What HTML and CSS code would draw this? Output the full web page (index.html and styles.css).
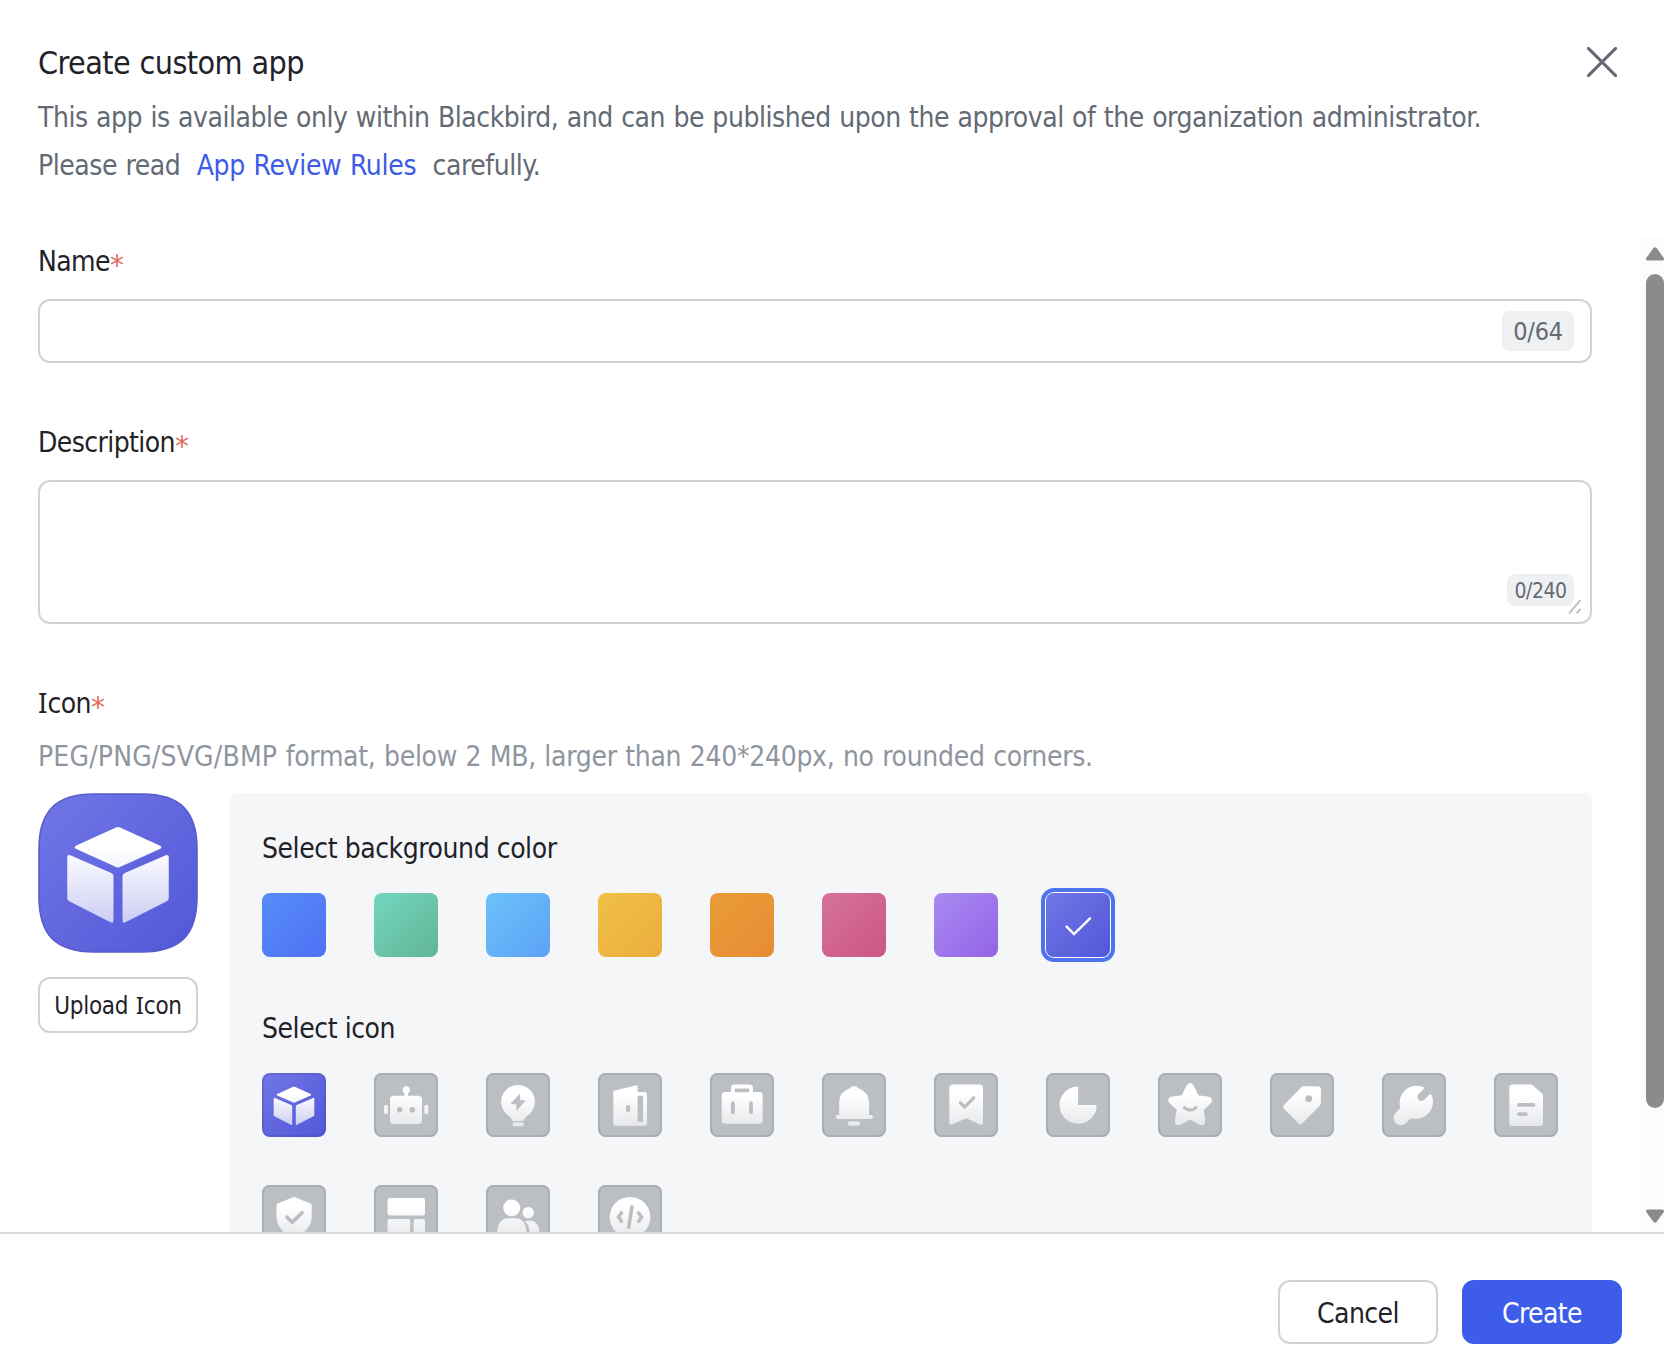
FILE: index.html
```html
<!DOCTYPE html>
<html lang="en">
<head>
<meta charset="utf-8">
<title>Create custom app</title>
<link rel="stylesheet" href="styles.css">
</head>
<body>
<svg class="defs" aria-hidden="true">
  <defs>
    <linearGradient id="indigo" x1="0" y1="0" x2="1" y2="1">
      <stop offset="0" stop-color="#7176e6"/><stop offset="1" stop-color="#5257d8"/>
    </linearGradient>
    <linearGradient id="glyph" gradientUnits="userSpaceOnUse" x1="0" y1="22" x2="0" y2="54">
      <stop offset="0" stop-color="#fff"/><stop offset="1" stop-color="#e6e7e9"/>
    </linearGradient>
    <linearGradient id="glass" gradientUnits="userSpaceOnUse" x1="0" y1="22" x2="0" y2="54">
      <stop offset="0" stop-color="#fff"/><stop offset="1" stop-color="#fff" stop-opacity=".66"/>
    </linearGradient>
    <symbol id="cube" viewBox="0 0 64 64">
      <g fill="url(#glass)">
        <path d="M31.2 13.8Q32 13.4 32.8 13.8L48.7 21Q50 21.7 48.7 22.4L32.8 29.6Q32 30 31.2 29.6L15.3 22.4Q14 21.7 15.3 21Z"/>
        <path d="M11.7 25.7Q11.7 24.4 12.9 24.9L29.3 32Q30.2 32.4 30.2 33.3V51Q30.2 52.3 29 51.7L12.5 43.3Q11.7 42.9 11.7 42Z"/>
        <path d="M52.3 25.7Q52.3 24.4 51.1 24.9L34.7 32Q33.8 32.4 33.8 33.3V51Q33.8 52.3 35 51.7L51.5 43.3Q52.3 42.9 52.3 42Z"/>
      </g>
    </symbol>
  </defs>
</svg>
<div class="dialog">
  <header class="header">
    <div class="heading">
      <h1 class="title">Create custom app</h1>
      <p class="subtitle">This app is available only within Blackbird, and can be published upon the approval of the organization administrator.<br>Please read <a class="link">App Review Rules</a> carefully.</p>
    </div>
    <svg class="close" viewBox="0 0 30 30"><path d="M1.4 1.4 28.6 28.6M28.6 1.4 1.4 28.6"/></svg>
  </header>

  <div class="body">
    <main class="content">
      <section class="field">
        <div class="label">Name<span class="star">*</span></div>
        <div class="input"><span class="count">0/64</span></div>
      </section>
      <section class="field">
        <div class="label">Description<span class="star">*</span></div>
        <div class="input textarea">
          <span class="count count-small">0/240</span>
          <svg class="resize" viewBox="0 0 14 16"><path d="M1.6 13.8 12.2 1.4M9.2 13.8 12.2 10.4"/></svg>
        </div>
      </section>
      <section class="field">
        <div class="label"><span class="cap-i">I</span>con<span class="star">*</span></div>
        <p class="hint"><span class="formats">PEG/PNG/SVG/BMP</span> format, below 2 MB, larger than 240*240px, no rounded corners.</p>
        <div class="picker">
          <div class="preview">
            <svg class="app-icon" viewBox="0 0 160 160">
              <path d="M1 56C1 18 18 1 56 1H104C142 1 159 18 159 56V104C159 142 142 159 104 159H56C18 159 1 142 1 104Z" fill="url(#indigo)" stroke="#575cc8" stroke-width="1.6"/>
              <use href="#cube" width="160" height="160"/>
            </svg>
            <button class="upload">Upload <span class="cap-i">I</span>con</button>
          </div>
          <div class="panel">
            <div class="label panel-label">Select background color</div>
            <div class="grid">
              <span class="swatch blue"></span>
              <span class="swatch green"></span>
              <span class="swatch sky"></span>
              <span class="swatch yellow"></span>
              <span class="swatch orange"></span>
              <span class="swatch pink"></span>
              <span class="swatch purple"></span>
              <span class="swatch indigo chosen"><svg viewBox="0 0 64 64"><path class="tick" d="M20.6 33.6 28 41 44 25.4"/></svg></span>
            </div>
            <div class="label panel-label second">Select icon</div>
            <div class="grid">
              <span class="tile indigo picked"><svg viewBox="0 0 64 64"><use href="#cube"/></svg></span>
              <span class="tile"><svg viewBox="0 0 64 64">
                <path d="M30.4 20.2A3.7 3.7 0 1 1 34 20.2V22.7H44.5Q48 22.7 48 26.2V47.5Q48 51 44.5 51H19.5Q16 51 16 47.5V26.2Q16 22.7 19.5 22.7H30.4Z"/>
                <rect x="10" y="32" width="4" height="9" rx="1.5"/><rect x="50.3" y="32" width="4" height="9" rx="1.5"/>
                <circle class="hole" cx="25.7" cy="36.7" r="2.8"/><circle class="hole" cx="38.4" cy="36.7" r="2.8"/>
              </svg></span>
              <span class="tile"><svg viewBox="0 0 64 64">
                <path d="M32 11.9A16.8 16.8 0 0 1 41.3 42.7Q39.3 44 38.5 46.2Q38 48 36 48H28Q26 48 25.5 46.2Q24.7 44 22.7 42.7A16.8 16.8 0 0 1 32 11.9Z"/>
                <rect x="26.5" y="49.2" width="11.4" height="4" rx="2"/>
                <path class="hole" d="M33.4 21.2Q34.2 20.4 34.2 21.6V27.2H38.6Q39.8 27.3 39 28.2L31.3 37Q30.4 37.9 30.4 36.7V31.2H25.6Q24.4 31 25.3 30Z"/>
              </svg></span>
              <span class="tile"><svg viewBox="0 0 64 64">
                <path d="M15.3 19.4Q15.3 17.9 16.8 17.4L38.4 12.3Q39.6 12 39.6 13.2V19H46Q49 19 49 22V50Q49 52.8 46.2 52.8H18Q15.3 52.8 15.3 50Z"/>
                <rect class="hole" x="39.6" y="22.8" width="5.4" height="26" rx=".6"/><rect class="hole" x="28" y="32" width="4.2" height="7.2" rx="2.1"/>
              </svg></span>
              <span class="tile"><svg viewBox="0 0 64 64">
                <path d="M21 19V15.2Q21 11.6 24.6 11.6H39.4Q43 11.6 43 15.2V19H49.2Q52.7 19 52.7 22.5V47.2Q52.7 50.7 49.2 50.7H15.2Q11.7 50.7 11.7 47.2V22.5Q11.7 19 15.2 19Z"/>
                <rect class="hole" x="24.8" y="15.6" width="14.4" height="3.6" rx=".6"/>
                <rect class="hole" x="21" y="28.3" width="3.8" height="12.9" rx="1.9"/><rect class="hole" x="39.1" y="28.3" width="3.8" height="12.9" rx="1.9"/>
              </svg></span>
              <span class="tile"><svg viewBox="0 0 64 64">
                <path d="M28.4 15Q28.8 13.2 30.6 13.2H33.6Q35.4 13.2 35.8 15Q47 18.6 47 30V42H49Q51 42 51 44T49 46H15.6Q13.6 46 13.6 44T15.6 42H17.2V30Q17.2 18.6 28.4 15Z"/>
                <rect x="25.8" y="48.2" width="12.4" height="4.6" rx="2.3"/>
              </svg></span>
              <span class="tile"><svg viewBox="0 0 64 64">
                <path d="M19 11.5H45.4Q49 11.5 49 15V49.4Q49 53 45.6 51.3L33.4 45.8Q32.2 45.2 31 45.8L18.7 51.3Q15.3 53 15.3 49.4V15Q15.3 11.5 19 11.5Z"/>
                <path class="line" d="M26.4 29.8 30.6 34 39.8 24.8"/>
              </svg></span>
              <span class="tile"><svg viewBox="0 0 64 64">
                <path d="M31 13.6Q32.1 13.6 32.1 14.7V32H49.6Q50.7 32 50.7 33.1A18.6 18.6 0 1 1 31 13.6Z"/>
              </svg></span>
              <span class="tile"><svg viewBox="0 0 64 64">
                <path d="M28.6 12.4Q32.1 7.6 35.5 12.4Q38 16.4 39.8 21.3Q40.1 22.3 41.2 22.4Q46.5 22.6 51 23.8Q56.3 26 52.7 30.3Q50.2 33.3 46.5 36Q45.5 36.8 45.7 38Q47 43 47.2 48.4Q46.6 53.4 42 51.7Q37.5 49.6 33.4 47.3Q32.2 46.6 31 47.3Q26.8 49.9 22.2 51.8Q17.5 53.2 17 48.4Q17.2 43 18.7 38Q18.9 36.8 17.9 36Q14 33.2 11.3 30.1Q8 25.7 13.2 23.8Q17.8 22.6 23 22.4Q24.1 22.3 24.4 21.3Q26.2 16.5 28.6 12.4Z"/>
                <path class="line" d="M26.5 34.6Q32.2 39.8 38 34.6"/>
              </svg></span>
              <span class="tile"><svg viewBox="0 0 64 64">
                <path d="M31.3 14.2Q32.3 13.2 33.7 13.2H47.6Q50.9 13.2 50.9 16.5V30.1Q50.9 31.5 49.9 32.5L31.9 50.7Q30.2 52.2 28.5 50.6L13.7 35.6Q12.4 34 13.8 32.3Z"/>
                <circle class="hole" cx="38.7" cy="25.7" r="3.4"/>
              </svg></span>
              <span class="tile"><svg viewBox="0 0 64 64">
                <path d="M41.2 14Q43 14.9 41.5 16.3L36.6 21.2Q34.3 23.6 36 26.1Q38.9 29.4 42.1 26.8L47.1 21.9Q48.8 20.5 49.8 22.6C54.6 34.8 44.6 48.8 28.9 45.2L24.9 49.3A7.4 7.4 0 1 1 14.2 39.2L18.5 35C14.5 20.5 27.6 8.6 41.2 14Z"/>
              </svg></span>
              <span class="tile"><svg viewBox="0 0 64 64">
                <path d="M18.3 11.6H36.8Q38.2 11.6 39.2 12.6L47.9 20.6Q49 21.6 49 23V49.9Q49 52.9 46 52.9H18.3Q15.3 52.9 15.3 49.9V14.6Q15.3 11.6 18.3 11.6Z"/>
                <rect class="hole" x="23" y="30" width="18.4" height="3.8" rx="1.9"/><rect class="hole" x="23" y="39.2" width="10.8" height="3.8" rx="1.9"/>
              </svg></span>
              <span class="tile"><svg viewBox="0 0 64 64">
                <path d="M31 12.3Q32 11.8 33 12.3L48.5 18.4Q49.7 19 49.7 20.4V31C49.7 41 43 49 32 53C21 49 14.5 41 14.5 31V20.4Q14.5 19 15.7 18.4Z"/>
                <path class="line thick" d="M24.9 32.2 30.3 37.4 40.2 27.6"/>
              </svg></span>
              <span class="tile"><svg viewBox="0 0 64 64">
                <rect x="13.6" y="13.1" width="37.4" height="17.4" rx="2"/><rect x="13.6" y="34" width="22.6" height="17" rx="2"/><rect x="39.6" y="34" width="11.4" height="17" rx="2"/>
              </svg></span>
              <span class="tile"><svg viewBox="0 0 64 64">
                <circle cx="25.7" cy="22.9" r="8.5"/><circle cx="42.3" cy="27.6" r="5.7"/>
                <path d="M11 50V47Q12 33.2 23 33.2H29Q39.7 33.2 40.4 47V50Z"/><path d="M38.7 35.9Q41 35.6 44 35.6Q52.7 36 53.6 46.5V50H43.5V46Q43.2 39.6 38.7 35.9Z"/>
              </svg></span>
              <span class="tile"><svg viewBox="0 0 64 64">
                <circle cx="32" cy="32.2" r="20.3"/>
                <path class="line thick" d="M33.9 21.8 30.7 42.2M23.4 27.9 20.4 32 23.4 36.2M40.6 27.9 43.6 32 40.6 36.2"/>
              </svg></span>
            </div>
          </div>
        </div>
      </section>
    </main>
    <div class="scrollbar">
      <svg class="arrow" viewBox="0 0 18 14"><path d="M7.3 1.3Q9 -.9 10.7 1.3L17.6 10.8Q18.8 13.4 16.2 13.6H1.8Q-.8 13.4 .4 10.8Z"/></svg>
      <div class="thumb"></div>
      <svg class="arrow down" viewBox="0 0 18 14"><path d="M7.3 1.3Q9 -.9 10.7 1.3L17.6 10.8Q18.8 13.4 16.2 13.6H1.8Q-.8 13.4 .4 10.8Z"/></svg>
    </div>
  </div>

  <footer class="footer">
    <button class="btn">Cancel</button>
    <button class="btn primary">Create</button>
  </footer>
</div>
</body>
</html>
```
FILE: styles.css
```css
* { box-sizing: border-box; margin: 0; padding: 0; }
body {
  font-family: "DejaVu Sans Condensed", "DejaVu Sans", sans-serif;
  font-size: 28px;
  letter-spacing: -0.45px;
  color: #1f2329;
  background: #fff;
}
.defs { display: block; width: 0; height: 0; }
.dialog { display: flex; flex-direction: column; height: 1367px; overflow: hidden; }

.header { display: flex; justify-content: space-between; height: 238px; flex: none; padding: 39px 47px 0 38px; }
.title { font-size: 32px; font-weight: 400; line-height: 48px; letter-spacing: -0.6px; word-spacing: 1px; }
.subtitle { margin-top: 7px; line-height: 48px; color: #646a73; word-spacing: 0.8px; white-space: nowrap; }
.link { color: #3c5be8; margin: 0 8px; letter-spacing: -0.3px; }
.close { width: 30px; height: 30px; margin-top: 8px; flex: none; fill: none; stroke: #646a73; stroke-width: 3; stroke-linecap: round; }

.body { display: flex; flex: 1; min-height: 0; overflow: hidden; }
.content { flex: 1; padding: 1px 48px 0 38px; }
.field { margin-bottom: 57px; }
.label { line-height: 46px; letter-spacing: -0.6px; }
.panel-label { letter-spacing: -0.44px; }
.cap-i { font-family: "Noto Sans", sans-serif; line-height: 1; letter-spacing: 0; }
.star {
  position: relative;
  top: 4px;
  font-family: "DejaVu Sans", sans-serif;
  font-size: 28px;
  line-height: 1;
  color: #e2695e;
}
.input {
  display: flex;
  align-items: center;
  justify-content: flex-end;
  height: 64px;
  margin-top: 14px;
  padding-right: 16px;
  border: 2px solid #d0d3d6;
  border-radius: 12px;
}
.count {
  width: 72px;
  height: 40px;
  border-radius: 8px;
  background: #eff0f1;
  color: #646a73;
  font-size: 25px;
  line-height: 41px;
  text-align: center;
  letter-spacing: -0.3px;
}
.textarea { position: relative; height: 144px; align-items: flex-end; padding-bottom: 16px; }
.count-small { width: 67px; height: 32px; font-size: 21px; line-height: 34px; letter-spacing: -0.5px; }
.resize { position: absolute; right: 8px; bottom: 7px; width: 14px; height: 16px; fill: none; stroke: #bbbfc4; stroke-width: 1.9; stroke-linecap: round; }

.hint { margin-top: 7px; line-height: 46px; color: #8f959e; letter-spacing: -0.3px; word-spacing: 0.8px; }
.formats { letter-spacing: 0.17px; }
.picker { display: flex; gap: 32px; margin-top: 13px; }
.preview { display: flex; flex-direction: column; gap: 24px; width: 160px; flex: none; }
.app-icon { display: block; width: 160px; height: 160px; }
button { padding-top: 2px; font-family: inherit; color: inherit; background: #fff; border: 2px solid #d0d3d6; border-radius: 12px; }
.upload { height: 56px; font-size: 24px; letter-spacing: -0.3px; word-spacing: 1px; white-space: nowrap; }
.panel { flex: 1; padding: 33px 32px 32px; background: #f5f6f7; border-radius: 8px; }
.second { margin-top: 49px; }
.grid { display: grid; grid-template-columns: repeat(12, 64px); gap: 48px; margin-top: 21px; }
.swatch, .tile { width: 64px; height: 64px; border-radius: 8px; }
.swatch svg, .tile svg { display: block; width: 64px; height: 64px; }
.blue { background: linear-gradient(135deg, #558df8, #4f70f5); }
.green { background: linear-gradient(135deg, #73d6c0, #62b594); }
.sky { background: linear-gradient(135deg, #6dc1fb, #5ba2f5); }
.yellow { background: linear-gradient(135deg, #f0c044, #ebad3e); }
.orange { background: linear-gradient(135deg, #ea9c38, #e78c33); }
.pink { background: linear-gradient(135deg, #d5739b, #cc5684); }
.purple { background: linear-gradient(135deg, #a98af1, #9364e7); }
.indigo { background: linear-gradient(135deg, #7176e6, #5257d8); }
.chosen { box-shadow: 0 0 0 1px #fff, 0 0 0 5px #4e73ee; }
.tick { fill: none; stroke: #fff; stroke-width: 2.4; stroke-linecap: round; }
.tile { background-color: #bbbfc4; box-shadow: inset 0 0 0 2px #abaeb5; }
.picked { box-shadow: inset 0 0 0 2px rgba(64, 68, 160, 0.25); }
.tile svg { fill: url(#glyph); }
.tile .hole { fill: #bbbfc4; }
.tile .line { fill: none; stroke: #bbbfc4; stroke-width: 3.2; stroke-linecap: round; stroke-linejoin: round; }
.tile .thick { stroke-width: 3.6; }

.scrollbar { display: flex; flex-direction: column; width: 24px; padding: 9px 0 9px 6px; background: #fcfcfc; }
.arrow { display: block; width: 18px; height: 14px; flex: none; fill: #8b8b8b; }
.thumb { height: 834px; margin: 13px 0 auto; border-radius: 9px; background: #8b8b8b; }
.down { transform: rotate(180deg); }

.footer { display: flex; justify-content: flex-end; gap: 24px; height: 135px; flex: none; padding: 46px 42px 0 0; border-top: 2px solid #dcddde; }
.btn { width: 160px; height: 64px; font-size: 28px; letter-spacing: -0.6px; }
.primary { background: #3c5ce9; border-color: #3c5ce9; color: #fff; }
```
